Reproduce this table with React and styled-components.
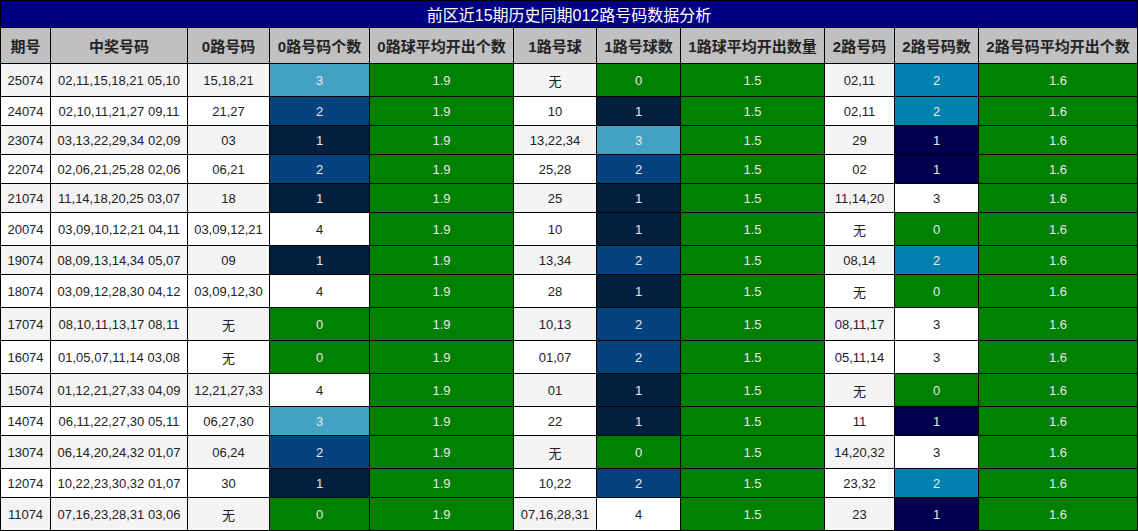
import React from "react";
import styled, { createGlobalStyle } from "styled-components";

const Global = createGlobalStyle`
  html, body { margin: 0; padding: 0; background: #fff; }
  body { font-family: "Liberation Sans", Arial, "Noto Sans CJK SC", sans-serif; }
`;

const Table = styled.table`
  width: 1138px;
  table-layout: fixed;
  border-collapse: collapse;
  border: 1px solid #000;
  font-family: "Liberation Sans", Arial, "Noto Sans CJK SC", sans-serif;
`;

const Title = styled.th`
  background: #000080;
  color: #fff;
  font-size: 16px;
  font-weight: normal;
  padding: 1px 0;
  border: 1px solid #000;
  text-align: center;
`;

const Head = styled.th`
  background: #c0c0c0;
  color: #222;
  font-size: 15px;
  font-weight: bold;
  padding: 7px 2px;
  border: 1px solid #000;
  text-align: center;
  white-space: nowrap;
`;

const Cell = styled.td`
  font-size: 13px;
  padding: 7px 2px 6px;
  border: 1px solid #000;
  text-align: center;
  vertical-align: middle;
  white-space: nowrap;
  background: ${(p) => p.$bg || (p.$stripe ? "#f4f4f4" : "#fff")};
  color: ${(p) => (p.$light ? "#e8e8e8" : "#222")};
`;

const widths = [50, 137, 82, 100, 144, 83, 84, 144, 70, 84, 159];
const headers = [
  "期号",
  "中奖号码",
  "0路号码",
  "0路号码个数",
  "0路球平均开出个数",
  "1路号球",
  "1路号球数",
  "1路球平均开出数量",
  "2路号码",
  "2路号码数",
  "2路号码平均开出个数",
];

const rows = [
  ["25074", "02,11,15,18,21 05,10", "15,18,21", 3, "无", 0, "02,11", 2],
  ["24074", "02,10,11,21,27 09,11", "21,27", 2, "10", 1, "02,11", 2],
  ["23074", "03,13,22,29,34 02,09", "03", 1, "13,22,34", 3, "29", 1],
  ["22074", "02,06,21,25,28 02,06", "06,21", 2, "25,28", 2, "02", 1],
  ["21074", "11,14,18,20,25 03,07", "18", 1, "25", 1, "11,14,20", 3],
  ["20074", "03,09,10,12,21 04,11", "03,09,12,21", 4, "10", 1, "无", 0],
  ["19074", "08,09,13,14,34 05,07", "09", 1, "13,34", 2, "08,14", 2],
  ["18074", "03,09,12,28,30 04,12", "03,09,12,30", 4, "28", 1, "无", 0],
  ["17074", "08,10,11,13,17 08,11", "无", 0, "10,13", 2, "08,11,17", 3],
  ["16074", "01,05,07,11,14 03,08", "无", 0, "01,07", 2, "05,11,14", 3],
  ["15074", "01,12,21,27,33 04,09", "12,21,27,33", 4, "01", 1, "无", 0],
  ["14074", "06,11,22,27,30 05,11", "06,27,30", 3, "22", 1, "11", 1],
  ["13074", "06,14,20,24,32 01,07", "06,24", 2, "无", 0, "14,20,32", 3],
  ["12074", "10,22,23,30,32 01,07", "30", 1, "10,22", 2, "23,32", 2],
  ["11074", "07,16,23,28,31 03,06", "无", 0, "07,16,28,31", 4, "23", 1],
];

const GREEN = "#008000";
const countA = { 0: GREEN, 1: "#01203f", 2: "#03427f", 3: "#43a1c4", 4: "#fff" };
const countB = { 0: GREEN, 1: "#00004f", 2: "#0081ae", 3: "#fff" };

function Count({ value, palette }) {
  const bg = palette[value];
  return (
    <Cell $bg={bg} $light={bg !== "#fff"}>
      {value}
    </Cell>
  );
}

export default function App() {
  return (
    <>
      <Global />
      <Table>
        <colgroup>
          {widths.map((w, i) => (
            <col key={i} style={{ width: w }} />
          ))}
        </colgroup>
        <thead>
          <tr>
            <Title colSpan={11}>前区近15期历史同期012路号码数据分析</Title>
          </tr>
          <tr>
            {headers.map((h) => (
              <Head key={h}>{h}</Head>
            ))}
          </tr>
        </thead>
        <tbody>
          {rows.map((r, i) => {
            const s = i % 2 === 0;
            return (
              <tr key={r[0]}>
                <Cell $stripe={s}>{r[0]}</Cell>
                <Cell $stripe={s}>{r[1]}</Cell>
                <Cell $stripe={s}>{r[2]}</Cell>
                <Count value={r[3]} palette={countA} />
                <Cell $bg={GREEN} $light>1.9</Cell>
                <Cell $stripe={s}>{r[4]}</Cell>
                <Count value={r[5]} palette={countA} />
                <Cell $bg={GREEN} $light>1.5</Cell>
                <Cell $stripe={s}>{r[6]}</Cell>
                <Count value={r[7]} palette={countB} />
                <Cell $bg={GREEN} $light>1.6</Cell>
              </tr>
            );
          })}
        </tbody>
      </Table>
    </>
  );
}
